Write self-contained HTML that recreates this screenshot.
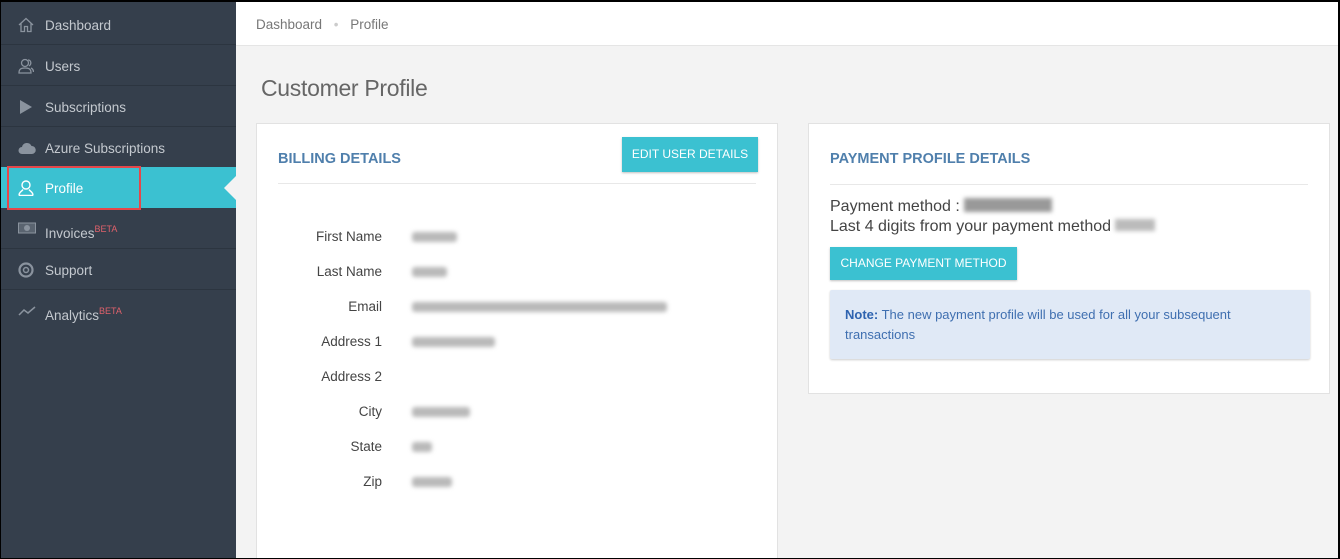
<!DOCTYPE html>
<html><head><style>
*{box-sizing:border-box;margin:0;padding:0}
body{width:1340px;height:559px;overflow:hidden;font-family:"Liberation Sans",sans-serif;background:#000;position:relative}
#wrap{position:absolute;left:1px;top:2px;width:1337px;height:556px;background:#f3f3f3;overflow:hidden}
#side{position:absolute;left:0;top:0;width:235px;height:556px;background:#353f4c}
.it{position:absolute;left:0;width:235px;height:41px;border-bottom:1px solid #2c3540;color:#c4c9cf;font-size:13.5px;line-height:43px;padding-left:44px}
.it svg{position:absolute;left:17px;top:13px}
.it sup{color:#e0616b;font-size:9px;vertical-align:6px}
.act{background:#3bc1d1;color:#fff;border:none}
.red{position:absolute;left:6px;top:164px;width:134px;height:44px;border:2px solid #e5474a}
#crumb{position:absolute;left:235px;top:0;right:0;height:44px;background:#fff;border-bottom:1px solid #e5e5e5;font-size:13.5px;color:#777;line-height:46px;padding-left:20px}
h1{position:absolute;left:260px;top:73px;font-weight:normal;font-size:23px;color:#666;letter-spacing:-0.3px}
.panel{position:absolute;background:#fff;border:1px solid #e2e2e2}
.ph{position:absolute;font-size:14.5px;font-weight:bold;color:#4f7fac}
.btn{position:absolute;background:#3bc1d1;color:#fff;font-size:12px;text-align:center;box-shadow:0 1px 2px rgba(0,0,0,.25)}
.lbl{position:absolute;width:125px;text-align:right;font-size:13.5px;color:#444}
.val{position:absolute;height:10px;background:#b9b9b9;filter:blur(2px);border-radius:3px}
</style></head><body><div id="wrap">
<div id="side">
<div class="it" style="top:2px"><svg width="16" height="16" viewBox="0 0 16 16" fill="none" stroke="#8a939e" stroke-width="1.3"><path d="M1 8L8 1.5 15 8M3 6.5V14.5H6.5V9.5H9.5V14.5H13V6.5"/></svg>Dashboard</div>
<div class="it" style="top:43px"><svg width="16" height="16" viewBox="0 0 16 16" fill="none" stroke="#8a939e" stroke-width="1.3"><circle cx="7" cy="5" r="3.5"/><path d="M1 15c0-4 2-5 6-5s6 1 6 5zM10 2c3 0 4 4 1 6M13 10c2 1 2.5 2 2.5 4"/></svg>Users</div>
<div class="it" style="top:84px"><svg width="16" height="16" viewBox="0 0 16 16"><path d="M2 1L14 8 2 15z" fill="#8a939e"/></svg>Subscriptions</div>
<div class="it" style="top:125px"><svg width="18" height="16" viewBox="0 0 18 16"><path d="M4 14a3.5 3.5 0 010-7 5 5 0 019.5-1A4 4 0 0114 14z" fill="#8a939e"/></svg>Azure Subscriptions</div>
<div class="it act" style="top:165px"><svg width="16" height="16" viewBox="0 0 16 16" fill="none" stroke="#fff" stroke-width="1.4"><circle cx="8" cy="5" r="4"/><path d="M1 15.5c0-4 3-4 4-6M15 15.5c0-4-3-4-4-6M1 15.5h14"/></svg>Profile</div>
<svg style="position:absolute;left:223px;top:174px" width="12" height="24"><path d="M12 0L0 12 12 24z" fill="#f3f3f3"/></svg>
<div class="it" style="top:206px"><svg width="18" height="14" viewBox="0 0 18 14"><rect x="0.5" y="2" width="17" height="10" fill="#5a6470" stroke="#8a939e"/><circle cx="9" cy="7" r="3" fill="#8a939e"/></svg>Invoices<sup>BETA</sup></div>
<div class="it" style="top:247px"><svg width="16" height="16" viewBox="0 0 16 16" fill="none" stroke="#8a939e" stroke-width="2.2"><circle cx="8" cy="8" r="6.5"/><circle cx="8" cy="8" r="2.5" stroke-width="1.5"/></svg>Support</div>
<div class="it" style="top:288px;border:none"><svg width="18" height="16" viewBox="0 0 18 16" fill="none" stroke="#8a939e" stroke-width="1.5"><path d="M1 12l5-5 4 3 7-6"/></svg>Analytics<sup>BETA</sup></div>
<div class="red"></div>
</div>
<div id="crumb">Dashboard <span style="color:#ccc;margin:0 8px">•</span> Profile</div>
<h1>Customer Profile</h1>
<div class="panel" style="left:255px;top:121px;width:522px;height:460px">
<div class="ph" style="left:21px;top:27px">BILLING DETAILS</div>
<div class="btn" style="left:365px;top:13px;width:136px;height:35px;line-height:35px">EDIT USER DETAILS</div>
<div style="position:absolute;left:21px;right:21px;top:59px;border-top:1px solid #e8e8e8"></div>
<div class="lbl" style="left:0;top:105px">First Name</div><div class="val" style="left:155px;top:108px;width:45px"></div>
<div class="lbl" style="left:0;top:140px">Last Name</div><div class="val" style="left:155px;top:143px;width:35px"></div>
<div class="lbl" style="left:0;top:175px">Email</div><div class="val" style="left:155px;top:178px;width:255px"></div>
<div class="lbl" style="left:0;top:210px">Address 1</div><div class="val" style="left:155px;top:213px;width:83px"></div>
<div class="lbl" style="left:0;top:245px">Address 2</div>
<div class="lbl" style="left:0;top:280px">City</div><div class="val" style="left:155px;top:283px;width:58px"></div>
<div class="lbl" style="left:0;top:315px">State</div><div class="val" style="left:155px;top:318px;width:20px"></div>
<div class="lbl" style="left:0;top:350px">Zip</div><div class="val" style="left:155px;top:353px;width:40px"></div>
</div>
<div class="panel" style="left:807px;top:121px;width:522px;height:271px">
<div class="ph" style="left:21px;top:27px">PAYMENT PROFILE DETAILS</div>
<div style="position:absolute;left:21px;right:21px;top:60px;border-top:1px solid #e8e8e8"></div>
<div style="position:absolute;left:21px;top:73px;font-size:16px;color:#444;line-height:20px">Payment method : <span style="display:inline-block;width:88px;height:14px;background:#999;filter:blur(2px);vertical-align:-1px"></span><br>Last 4 digits from your payment method <span style="display:inline-block;width:40px;height:12px;background:#bbb;filter:blur(2px)"></span></div>
<div class="btn" style="left:21px;top:123px;width:187px;height:33px;line-height:33px">CHANGE PAYMENT METHOD</div>
<div style="position:absolute;left:21px;top:166px;width:480px;height:69px;background:#e0e9f6;box-shadow:0 1px 2px rgba(0,0,0,.2);border-radius:2px;padding:15px 15px;font-size:13px;line-height:20px;color:#3f6fb0"><b style="color:#2e63b0">Note:</b> The new payment profile will be used for all your subsequent transactions</div>
</div>
</div></body></html>
